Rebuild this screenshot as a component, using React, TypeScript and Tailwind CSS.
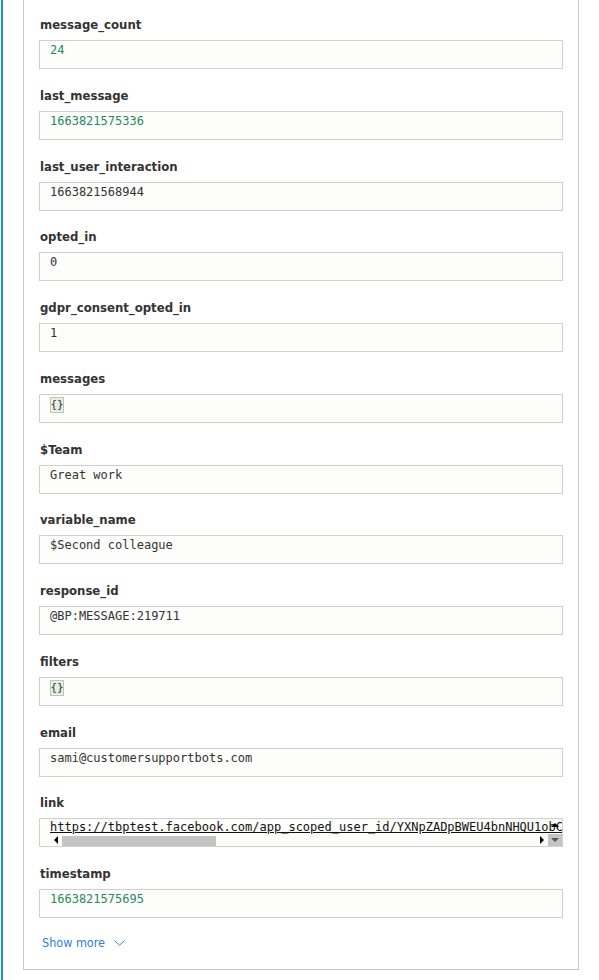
import React from 'react';

type Field = {
  name: string;
  value: string;
  kind?: 'number' | 'text' | 'object' | 'link';
};

const fields: Field[] = [
  { name: 'message_count', value: '24', kind: 'number' },
  { name: 'last_message', value: '1663821575336', kind: 'number' },
  { name: 'last_user_interaction', value: '1663821568944' },
  { name: 'opted_in', value: '0' },
  { name: 'gdpr_consent_opted_in', value: '1' },
  { name: 'messages', value: '{}', kind: 'object' },
  { name: '$Team', value: 'Great work' },
  { name: 'variable_name', value: '$Second colleague' },
  { name: 'response_id', value: '@BP:MESSAGE:219711' },
  { name: 'filters', value: '{}', kind: 'object' },
  { name: 'email', value: 'sami@customersupportbots.com' },
  {
    name: 'link',
    value: 'https://tbptest.facebook.com/app_scoped_user_id/YXNpZADpBWEU4bnNHQU1obC',
    kind: 'link',
  },
  { name: 'timestamp', value: '1663821575695', kind: 'number' },
];

const labelFont = { fontFamily: '"DejaVu Sans Condensed", "DejaVu Sans", sans-serif' };
const monoFont = { fontFamily: '"DejaVu Sans Mono", "Liberation Mono", monospace' };

export default function App() {
  return (
    <div className="flex h-[980px] w-[599px] overflow-hidden bg-white">
      {/* teal accent line */}
      <div className="ml-px h-full w-[2px] shrink-0 bg-[#17a2a0]" />

      <div className="ml-[20px] w-[556px] shrink-0 self-start border border-t-0 border-[#c8c8c8] px-[15px] pt-[15px] pb-[18px]">
        {fields.map((f) => (
          <FieldRow key={f.name} field={f} />
        ))}

        <button
          className="mt-[5px] flex items-center gap-[9px] pl-[3px] text-[12.5px] leading-[16px] text-[#2f7de1] font-stretch-condensed"
          style={labelFont}
        >
          Show more
          <svg width="11" height="6" viewBox="0 0 11 6" fill="none" className="mt-px">
            <path d="M0.5 0.5 L5.5 5.2 L10.5 0.5" stroke="#2f7de1" strokeWidth="1" />
          </svg>
        </button>
      </div>
    </div>
  );
}

const FieldRow = ({ field }: { field: Field }) => (
  <div className="mb-[16.75px]">
    <div
      className="mb-[6px] h-[19px] pt-px pl-px text-[13px] font-bold leading-[18px] text-[#333] font-stretch-condensed"
      style={labelFont}
    >
      {field.name}
    </div>
    {field.kind === 'link' ? <LinkBox value={field.value} /> : <ValueBox field={field} />}
  </div>
);

const ValueBox = ({ field }: { field: Field }) => (
  <div
    className={`h-[29px] border border-[#d0d0d0] bg-[#fdfdfb] pl-[10px] pt-[2px] text-[12px] leading-[14px] ${
      field.kind === 'number' ? 'text-[#268b5c]' : 'text-[#333]'
    }`}
    style={monoFont}
  >
    {field.kind === 'object' ? (
      <span className="inline-flex h-[16px] w-[14px] items-center justify-center border border-[#b9cab4] bg-[#e7efe4] text-[11px] leading-[14px] text-[#333]">
        {field.value}
      </span>
    ) : (
      field.value
    )}
  </div>
);

const LinkBox = ({ value }: { value: string }) => (
  <div className="relative h-[29px] overflow-hidden border border-[#d0d0d0] bg-[#fdfdfb]">
    <div
      className="h-[15px] overflow-hidden whitespace-nowrap pl-[10px] pt-px text-[12px] leading-[14px] text-[#111] underline underline-offset-[1px]"
      style={monoFont}
    >
      {value}
    </div>
    {/* horizontal scrollbar */}
    <div className="ml-[10px] mr-[14px] flex h-[12px] items-center">
      <div className="flex w-[12px] justify-center">
        <div className="h-0 w-0 border-y-[4px] border-r-[4px] border-y-transparent border-r-black" />
      </div>
      <div className="h-[10px] w-[154px] self-end bg-[#c4c4c4]" />
      <div className="flex-1" />
      <div className="flex w-[12px] justify-center">
        <div className="h-0 w-0 border-y-[4px] border-l-[4px] border-y-transparent border-l-black" />
      </div>
    </div>
    {/* vertical scrollbar */}
    <div className="absolute top-0 right-0 flex h-full w-[14px] flex-col">
      <div className="flex h-[12px] items-center justify-center">
        <div className="h-0 w-0 border-x-[4px] border-b-[4px] border-x-transparent border-b-black" />
      </div>
      <div className="flex-1" />
      <div className="flex h-[12px] items-center justify-center bg-[#c4c4c4]">
        <div className="h-0 w-0 border-x-[4px] border-t-[4px] border-x-transparent border-t-[#555]" />
      </div>
    </div>
  </div>
);
